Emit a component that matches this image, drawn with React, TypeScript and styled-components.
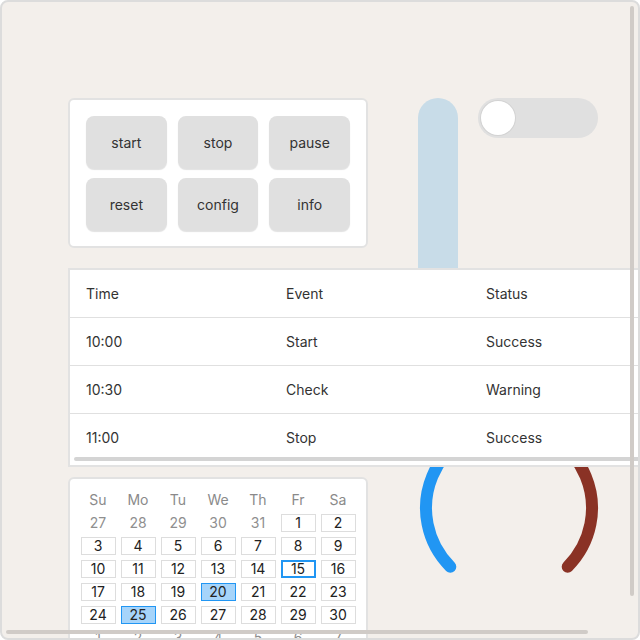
import React from 'react';
import styled, { createGlobalStyle } from 'styled-components';

const GlobalStyle = createGlobalStyle`
  html, body {
    margin: 0;
    padding: 0;
    background: #ffffff;
  }
  body {
    font-family: Inter, "Noto Sans", "Liberation Sans", sans-serif;
    color: #333;
  }
`;

const Shell = styled.div`
  position: relative;
  box-sizing: border-box;
  width: 640px;
  height: 640px;
  border: 2px solid #dcdcdc;
  border-radius: 8px;
  background: #f3efeb;
  overflow: hidden;
`;

const Viewport = styled.div`
  width: 100%;
  height: 100%;
  overflow: auto;
  scrollbar-width: none;
`;

// thin overlay scroll indicators, drawn over the content
const Thumb = styled.div<{ $color: string }>`
  position: absolute;
  z-index: 2;
  background: ${(p) => p.$color};
  border-radius: 2px;
  pointer-events: none;
`;

const Canvas = styled.div`
  display: grid;
  grid-template-columns: 300px 180px;
  column-gap: 50px;
  align-items: start;
  width: 622px;
  padding: 96px 8px 16px 66px;
`;

const Panel = styled.div`
  box-sizing: border-box;
  background: #ffffff;
  border: 2px solid #e2e2e2;
  border-radius: 6px;
`;

const ButtonPanel = styled(Panel)`
  grid-column: 1;
  grid-row: 1;
  display: grid;
  grid-template-columns: repeat(3, 1fr);
  gap: 10px 11px;
  padding: 16px;
`;

const ActionButton = styled.button`
  height: 52px;
  border: none;
  border-radius: 8px;
  background: #e0e0e0;
  box-shadow: 0 2px 1px rgba(0, 0, 0, 0.12);
  font-family: inherit;
  font-size: 14px;
  color: #333;
  cursor: pointer;
`;

const RightColumn = styled.div`
  grid-column: 2;
  grid-row: 1 / span 3;
  display: flex;
  flex-direction: column;
  align-items: flex-start;
  gap: 20px;
`;

const TopControls = styled.div`
  display: flex;
  align-items: flex-start;
  gap: 20px;
`;

const SliderTrack = styled.div`
  width: 40px;
  height: 300px;
  border-radius: 20px 20px 0 0;
  background: #c8dce8;
`;

const Toggle = styled.div<{ $on?: boolean }>`
  box-sizing: border-box;
  width: 120px;
  height: 40px;
  border-radius: 20px;
  background: ${(p) => (p.$on ? '#2196f3' : '#e0e0e0')};
  padding: 3px;
  display: flex;
  justify-content: ${(p) => (p.$on ? 'flex-end' : 'flex-start')};
`;

const Knob = styled.div`
  width: 34px;
  height: 34px;
  border-radius: 50%;
  background: #ffffff;
  box-shadow: 0 0 0 1px rgba(0, 0, 0, 0.06);
`;

const Gauge = styled.svg`
  display: block;
`;

const TableWrap = styled.div`
  grid-column: 1 / span 2;
  grid-row: 2;
  position: relative;
  z-index: 1;
  box-sizing: border-box;
  width: 620px;
  margin-top: 20px;
  background: #ffffff;
  border: 2px solid #e2e2e2;
`;

const TableScroll = styled.div`
  overflow-x: auto;
  scrollbar-width: none;
  padding-bottom: 4px;
`;

const Table = styled.table`
  width: 660px;
  border-collapse: collapse;
  table-layout: fixed;
  font-size: 14px;
`;

const Cell = styled.td`
  height: 47px;
  padding: 0 16px;
  text-align: left;
  font-weight: 400;
  color: #333;
  border-bottom: 1px solid #e0e0e0;

  tbody tr:last-child > & {
    border-bottom: none;
  }
`;

const HeadCell = styled(Cell).attrs({ as: 'th' })``;

const Calendar = styled(Panel)`
  grid-column: 1;
  grid-row: 3;
  margin-top: 10px;
  padding: 12px 10px 10px;
  display: grid;
  grid-template-columns: repeat(7, 35px);
  grid-auto-rows: 18px;
  column-gap: 5px;
  row-gap: 5px;
  justify-content: center;
`;

const WeekDay = styled.div`
  height: 18px;
  margin-bottom: 1px;
  text-align: center;
  font-size: 14px;
  line-height: 18px;
  color: #8a8a8a;
`;

type DayKind = 'muted' | 'normal' | 'today' | 'selected';

const Day = styled.div<{ $kind: DayKind }>`
  box-sizing: border-box;
  height: 18px;
  text-align: center;
  font-size: 14px;
  color: ${(p) => (p.$kind === 'muted' ? '#8f8f8f' : '#222')};
  background: ${(p) => (p.$kind === 'selected' ? '#a6d4fa' : 'transparent')};
  border: ${(p) =>
    p.$kind === 'muted'
      ? '1px solid transparent'
      : p.$kind === 'today'
      ? '2px solid #2196f3'
      : p.$kind === 'selected'
      ? '1px solid #2196f3'
      : '1px solid #dddddd'};
  line-height: ${(p) => (p.$kind === 'today' ? '14px' : '16px')};
`;

const buttons = ['start', 'stop', 'pause', 'reset', 'config', 'info'];

const rows = [
  ['10:00', 'Start', 'Success'],
  ['10:30', 'Check', 'Warning'],
  ['11:00', 'Stop', 'Success'],
];

const weekDays = ['Su', 'Mo', 'Tu', 'We', 'Th', 'Fr', 'Sa'];

const buildDays = () => {
  const days: { n: number; kind: DayKind }[] = [];
  [27, 28, 29, 30, 31].forEach((n) => days.push({ n, kind: 'muted' }));
  for (let n = 1; n <= 30; n++) {
    let kind: DayKind = 'normal';
    if (n === 15) kind = 'today';
    if (n === 20 || n === 25) kind = 'selected';
    days.push({ n, kind });
  }
  for (let n = 1; n <= 7; n++) days.push({ n, kind: 'muted' });
  return days;
};

const polar = (cx: number, cy: number, r: number, deg: number) => {
  const a = (deg * Math.PI) / 180;
  return [cx + r * Math.cos(a), cy + r * Math.sin(a)];
};

const arc = (from: number, to: number) => {
  const [x1, y1] = polar(91, 90, 83, from);
  const [x2, y2] = polar(91, 90, 83, to);
  const large = to - from > 180 ? 1 : 0;
  return `M ${x1} ${y1} A 83 83 0 ${large} 1 ${x2} ${y2}`;
};

const App: React.FC = () => {
  return (
    <>
      <GlobalStyle />
      <Shell>
        <Viewport>
          <Canvas>
            <ButtonPanel>
              {buttons.map((b) => (
                <ActionButton key={b}>{b}</ActionButton>
              ))}
            </ButtonPanel>

            <RightColumn>
              <TopControls>
                <SliderTrack />
                <Toggle>
                  <Knob />
                </Toggle>
              </TopControls>
              <Gauge width="182" height="180" viewBox="0 0 182 180">
                <path d={arc(135, 270)} fill="none" stroke="#2196f3" strokeWidth="12" strokeLinecap="round" />
                <path d={arc(270, 405)} fill="none" stroke="#8a3225" strokeWidth="12" strokeLinecap="round" />
              </Gauge>
            </RightColumn>

            <TableWrap>
              <TableScroll>
                <Table>
                  <colgroup>
                    <col style={{ width: 200 }} />
                    <col style={{ width: 200 }} />
                    <col style={{ width: 260 }} />
                  </colgroup>
                  <thead>
                    <tr>
                      <HeadCell>Time</HeadCell>
                      <HeadCell>Event</HeadCell>
                      <HeadCell>Status</HeadCell>
                    </tr>
                  </thead>
                  <tbody>
                    {rows.map((r) => (
                      <tr key={r[0]}>
                        {r.map((c) => (
                          <Cell key={c}>{c}</Cell>
                        ))}
                      </tr>
                    ))}
                  </tbody>
                </Table>
              </TableScroll>
              <Thumb $color="#d4d4d4" style={{ left: 4, bottom: 4, width: 600, height: 4 }} />
            </TableWrap>

            <Calendar>
              {weekDays.map((d) => (
                <WeekDay key={d}>{d}</WeekDay>
              ))}
              {buildDays().map((d, i) => (
                <Day key={i} $kind={d.kind}>
                  {d.n}
                </Day>
              ))}
            </Calendar>
          </Canvas>
        </Viewport>
        <Thumb $color="#d0cbc7" style={{ right: 4, top: 4, width: 4, height: 590 }} />
        <Thumb $color="#d0cbc7" style={{ left: 4, bottom: 4, width: 582, height: 4 }} />
      </Shell>
    </>
  );
};

export default App;
